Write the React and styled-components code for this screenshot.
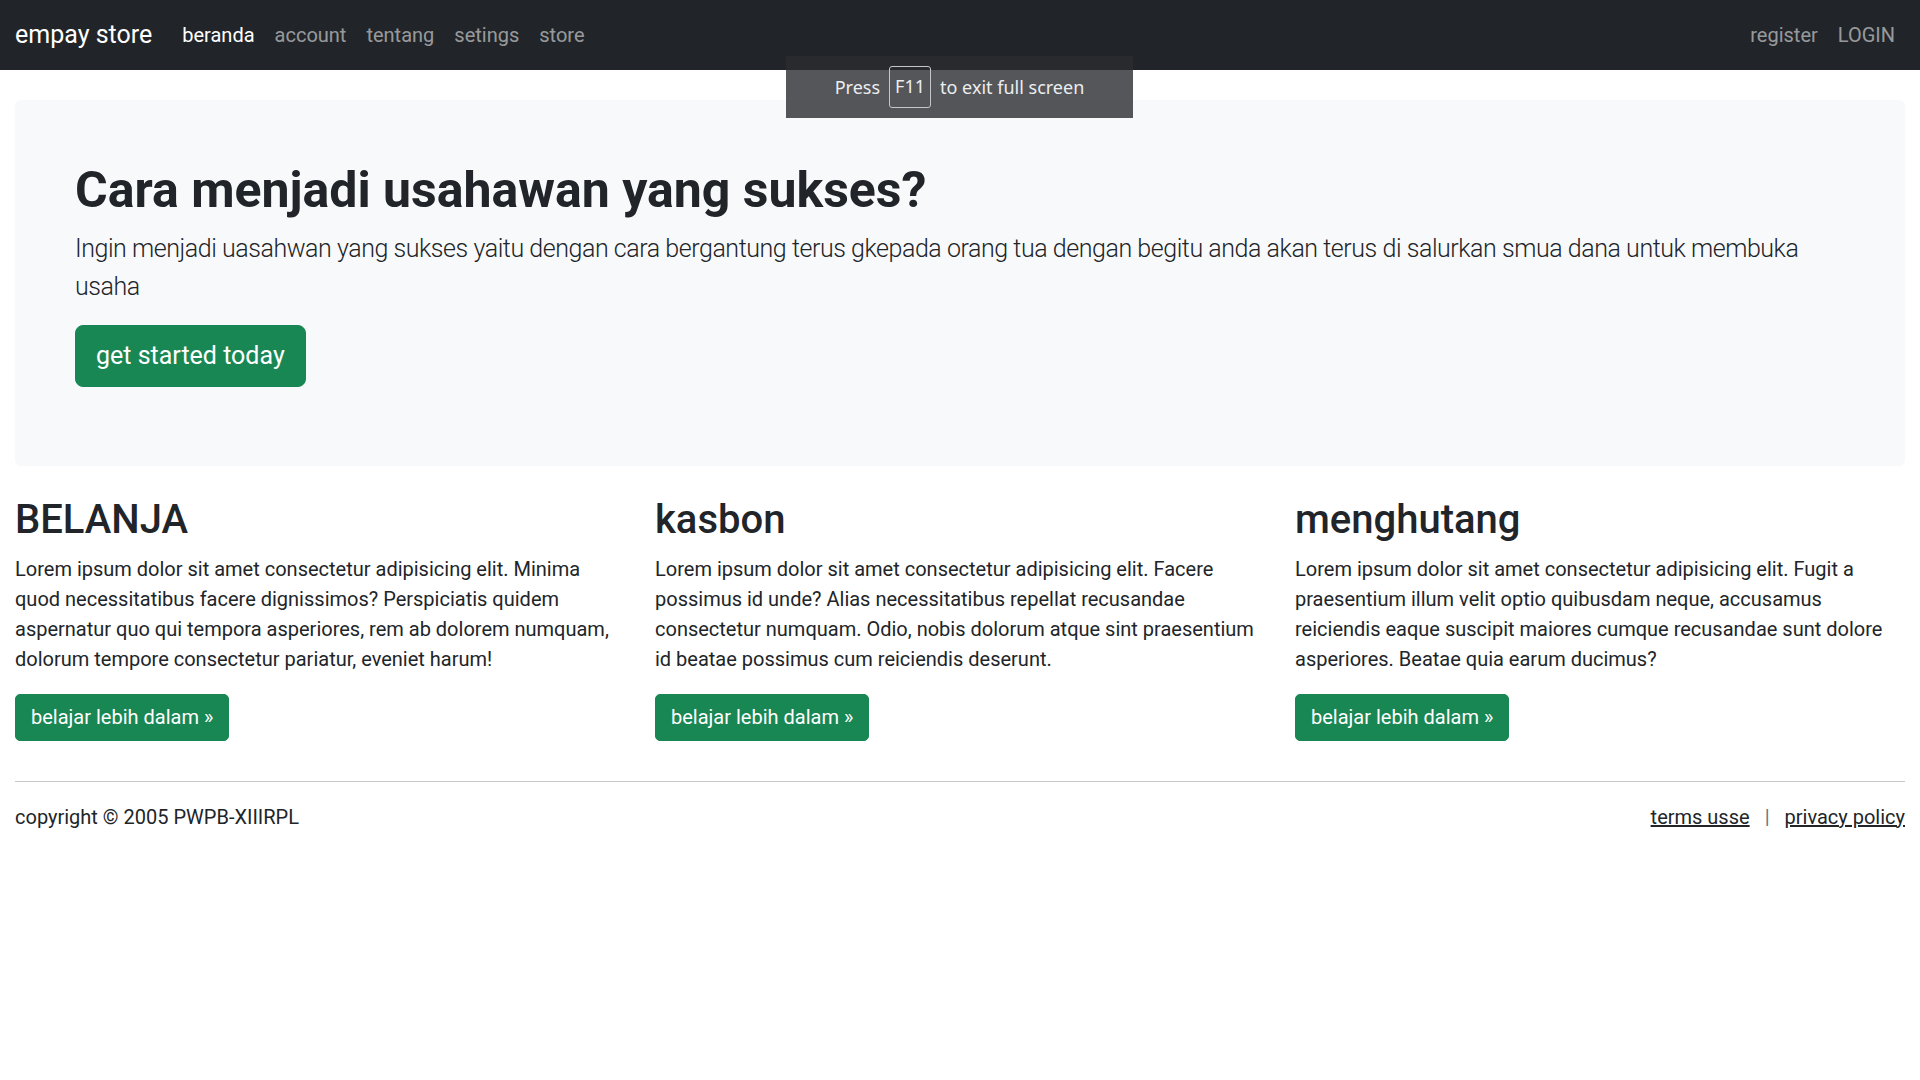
import React from 'react';
import styled, { createGlobalStyle } from 'styled-components';

const GlobalStyle = createGlobalStyle`
    * {
        box-sizing: border-box;
    }

    body {
        margin: 0;
        background: #fff;
        color: #212529;
        font-family: Roboto, 'Noto Sans', sans-serif;
        font-size: 20px;
        line-height: 1.5;
    }
`;

const Navbar = styled.nav`
    display: flex;
    align-items: center;
    justify-content: space-between;
    height: 70px;
    padding: 0 15px;
    background: #212529;
`;

const NavLeft = styled.div`
    display: flex;
    align-items: center;
`;

const Brand = styled.a`
    margin-right: 20px;
    color: #fff;
    font-size: 25px;
    line-height: 1.5;
    text-decoration: none;
`;

const NavList = styled.ul`
    display: flex;
    margin: 0;
    padding: 0;
    list-style: none;
`;

const NavLink = styled.a`
    display: block;
    padding: 10px;
    color: ${(p) => (p.$active ? '#fff' : 'rgba(255, 255, 255, 0.55)')};
    font-size: 20px;
    text-decoration: none;
`;

const Main = styled.main`
    padding: 30px 15px 0;
`;

const Jumbotron = styled.section`
    padding: 60px 60px 59px;
    border-radius: 6px;
    background: #f8f9fa;
`;

const Title = styled.h1`
    margin: 0 0 10px;
    font-size: 50px;
    font-weight: 700;
    line-height: 1.2;
`;

const Lead = styled.p`
    margin: 0 0 20px;
    font-size: 25px;
    font-weight: 300;
    line-height: 1.5;
    letter-spacing: -0.45px;
`;

const Button = styled.a`
    display: inline-block;
    padding: ${(p) => (p.$large ? '11px 20px' : '7.5px 15px')};
    border: 1px solid #198754;
    border-radius: ${(p) => (p.$large ? '8px' : '5px')};
    background: #198754;
    color: #fff;
    font-size: ${(p) => (p.$large ? '25px' : '20px')};
    line-height: 1.5;
    text-decoration: none;
`;

const ButtonRow = styled.p`
    margin: 0 0 20px;
`;

const Columns = styled.div`
    display: grid;
    grid-template-columns: repeat(3, 1fr);
    gap: 30px;
    margin-top: 30px;
`;

const Column = styled.article``;

const ColumnTitle = styled.h2`
    margin: 0 0 10px;
    font-size: 40px;
    font-weight: 500;
    line-height: 1.2;
`;

const ColumnText = styled.p`
    margin: 0 0 20px;
`;

const Rule = styled.hr`
    margin: 20px 0;
    border: 0;
    border-top: 1px solid #c8c9ca;
`;

const Footer = styled.footer`
    display: flex;
    justify-content: space-between;
    align-items: center;
`;

const FooterLinks = styled.div`
    display: flex;
    gap: 15px;
`;

const FooterLink = styled.a`
    color: #212529;
    text-decoration: underline;
`;

const Separator = styled.span`
    color: #6c757d;
`;

const FullscreenToast = styled.div`
    position: absolute;
    top: 56px;
    left: 786px;
    display: flex;
    align-items: center;
    justify-content: center;
    gap: 9px;
    width: 347px;
    height: 62px;
    background: rgba(42, 44, 48, 0.8);
    color: #eceef0;
    font-family: 'Noto Sans', sans-serif;
    font-size: 18px;
`;

const Key = styled.span`
    padding: 4px 5px;
    border: 1px solid #c4c6c9;
    border-radius: 3px;
    line-height: 1.75;
`;

const links = ['beranda', 'account', 'tentang', 'setings', 'store'];

const features = [
    {
        title: 'BELANJA',
        text: 'Lorem ipsum dolor sit amet consectetur adipisicing elit. Minima quod necessitatibus facere dignissimos? Perspiciatis quidem aspernatur quo qui tempora asperiores, rem ab dolorem numquam, dolorum tempore consectetur pariatur, eveniet harum!',
    },
    {
        title: 'kasbon',
        text: 'Lorem ipsum dolor sit amet consectetur adipisicing elit. Facere possimus id unde? Alias necessitatibus repellat recusandae consectetur numquam. Odio, nobis dolorum atque sint praesentium id beatae possimus cum reiciendis deserunt.',
    },
    {
        title: 'menghutang',
        text: 'Lorem ipsum dolor sit amet consectetur adipisicing elit. Fugit a praesentium illum velit optio quibusdam neque, accusamus reiciendis eaque suscipit maiores cumque recusandae sunt dolore asperiores. Beatae quia earum ducimus?',
    },
];

const App = () => {
    return (
        <>
            <GlobalStyle />
            <Navbar>
                <NavLeft>
                    <Brand href="#">empay store</Brand>
                    <NavList>
                        {links.map((label, i) => (
                            <li key={label}>
                                <NavLink href="#" $active={i === 0}>
                                    {label}
                                </NavLink>
                            </li>
                        ))}
                    </NavList>
                </NavLeft>
                <NavList>
                    <li>
                        <NavLink href="#">register</NavLink>
                    </li>
                    <li>
                        <NavLink href="#">LOGIN</NavLink>
                    </li>
                </NavList>
            </Navbar>

            <Main>
                <Jumbotron>
                    <Title>Cara menjadi usahawan yang sukses?</Title>
                    <Lead>
                        Ingin menjadi uasahwan yang sukses yaitu dengan cara bergantung terus gkepada orang tua dengan
                        begitu anda akan terus di salurkan smua dana untuk membuka usaha
                    </Lead>
                    <ButtonRow>
                        <Button href="#" $large>
                            get started today
                        </Button>
                    </ButtonRow>
                </Jumbotron>

                <Columns>
                    {features.map((item) => (
                        <Column key={item.title}>
                            <ColumnTitle>{item.title}</ColumnTitle>
                            <ColumnText>{item.text}</ColumnText>
                            <ButtonRow>
                                <Button href="#">belajar lebih dalam »</Button>
                            </ButtonRow>
                        </Column>
                    ))}
                </Columns>

                <Rule />

                <Footer>
                    <span>copyright © 2005 PWPB-XIIIRPL</span>
                    <FooterLinks>
                        <FooterLink href="#">terms usse</FooterLink>
                        <Separator>|</Separator>
                        <FooterLink href="#">privacy policy</FooterLink>
                    </FooterLinks>
                </Footer>
            </Main>

            <FullscreenToast>
                <span>Press</span>
                <Key>F11</Key>
                <span>to exit full screen</span>
            </FullscreenToast>
        </>
    );
};

export default App;
